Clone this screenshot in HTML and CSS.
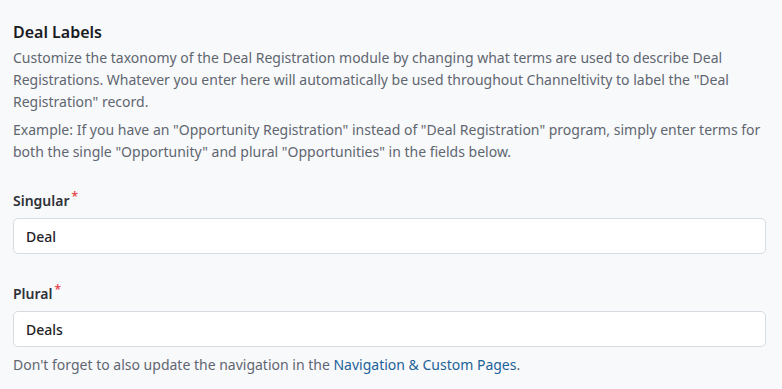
FILE: index.html
```html
<!DOCTYPE html>
<html lang="en">
<head>
    <meta charset="UTF-8">
    <meta name="viewport" content="width=device-width, initial-scale=1.0">
    <title>Deal Labels</title>
    <link rel="stylesheet" href="styles.css">
</head>
<body>
    <div class="panel">
        <h2>Deal Labels</h2>
        <p class="desc">Customize the taxonomy of the Deal Registration module by changing what terms are used to describe Deal Registrations. Whatever you enter here will automatically be used throughout Channeltivity to label the "Deal Registration" record.</p>
        <p class="desc">Example: If you have an "Opportunity Registration" instead of "Deal Registration" program, simply enter terms for both the single "Opportunity" and plural "Opportunities" in the fields below.</p>

        <div class="field">
            <label for="singular">Singular<span class="req">*</span></label>
            <input type="text" id="singular" value="Deal">
        </div>

        <div class="field">
            <label for="plural">Plural<span class="req">*</span></label>
            <input type="text" id="plural" value="Deals">
        </div>

        <p class="desc hint">Don't forget to also update the navigation in the <a href="#">Navigation &amp; Custom Pages</a>.</p>
    </div>
</body>
</html>
```

FILE: styles.css
```css
body {
    font-family: 'Noto Sans', sans-serif;
    margin: 0;
    background-color: #f8f9fb;
    color: #1f2328;
}

.panel {
    padding: 21px 16px 10px 13px;
}

h2 {
    font-size: 16px;
    font-weight: 600;
    margin: 0 0 4px;
    color: #1a1b1e;
}

.desc {
    font-size: 14px;
    line-height: 22px;
    color: #5f6670;
    margin: 0 0 6px;
}

.field {
    margin-top: 28px;
}

.field + .field {
    margin-top: 30px;
}

label {
    display: block;
    font-size: 14px;
    font-weight: 600;
    color: #2e3238;
    margin-bottom: 8px;
}

.req {
    color: #e5484d;
    font-size: 12px;
    line-height: 12px;
    vertical-align: top;
    margin-left: 2px;
}

input {
    display: block;
    box-sizing: border-box;
    width: 100%;
    height: 36px;
    padding: 0 12px;
    font-family: inherit;
    font-size: 14px;
    font-weight: 500;
    color: #1f2328;
    background: white;
    border: 1px solid #d8dce2;
    border-radius: 5px;
}

.hint {
    margin-top: 7px;
}

a {
    color: #1c6299;
    text-decoration: none;
}
```
